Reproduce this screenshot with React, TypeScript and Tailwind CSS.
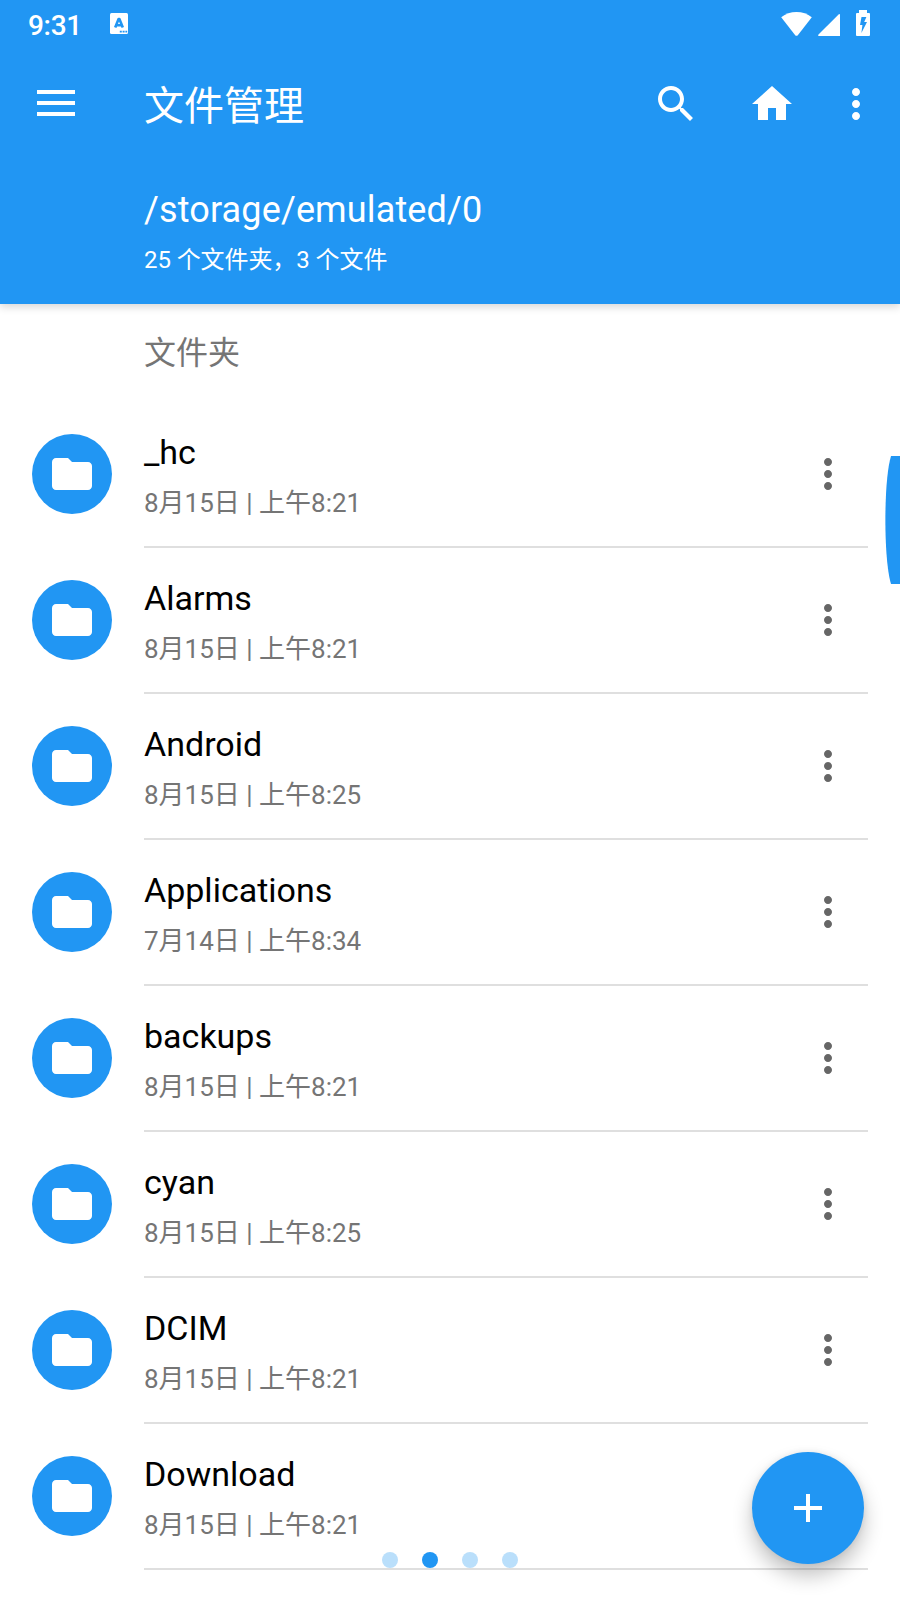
import React from "react";

type Entry = { name: string; date: string };

const entries: Entry[] = [
  { name: "_hc", date: "8月15日 | 上午8:21" },
  { name: "Alarms", date: "8月15日 | 上午8:21" },
  { name: "Android", date: "8月15日 | 上午8:25" },
  { name: "Applications", date: "7月14日 | 上午8:34" },
  { name: "backups", date: "8月15日 | 上午8:21" },
  { name: "cyan", date: "8月15日 | 上午8:25" },
  { name: "DCIM", date: "8月15日 | 上午8:21" },
  { name: "Download", date: "8月15日 | 上午8:21" },
];

function Icon({ d, className = "" }: { d: string; className?: string }) {
  return (
    <svg viewBox="0 0 24 24" className={`size-12 shrink-0 fill-current ${className}`}>
      <path d={d} />
    </svg>
  );
}

const MORE =
  "M12 8c1.1 0 2-.9 2-2s-.9-2-2-2-2 .9-2 2 .9 2 2 2zm0 2c-1.1 0-2 .9-2 2s.9 2 2 2 2-.9 2-2-.9-2-2-2zm0 6c-1.1 0-2 .9-2 2s.9 2 2 2 2-.9 2-2-.9-2-2-2z";
const SEARCH =
  "M15.5 14h-.79l-.28-.27C15.41 12.59 16 11.11 16 9.5 16 5.91 13.09 3 9.5 3S3 5.91 3 9.5 5.91 16 9.5 16c1.61 0 3.09-.59 4.23-1.57l.27.28v.79l5 4.99L20.49 19l-4.99-5zm-6 0C7.01 14 5 11.99 5 9.5S7.01 5 9.5 5 14 7.01 14 9.5 11.99 14 9.5 14z";
const HOME = "M10 20v-6h4v6h5v-8h3L12 3 2 12h3v8z";
const FOLDER =
  "M10 4H4c-1.1 0-1.99.9-1.99 2L2 18c0 1.1.9 2 2 2h16c1.1 0 2-.9 2-2V8c0-1.1-.9-2-2-2h-8l-2-2z";

function StatusBar() {
  return (
    <div className="flex h-12 items-start pl-7 pr-[30px]">
      <span className="mt-2.5 w-[82px] text-[28px] font-medium leading-8 tracking-[-0.3px]">9:31</span>
      <svg viewBox="0 0 18 21" className="mt-[13px] h-[21px] w-[18px]">
        <rect width="18" height="21" rx="1.5" fill="#fff" />
        <path
          d="M5.2 14.6 8.6 6h.8l3.4 8.6M6.8 12.2h4.4"
          fill="none"
          stroke="#2196f3"
          strokeWidth="2.6"
          strokeLinejoin="round"
        />
        <path d="M9.8 18.6h2M12.6 18.6h2M15.4 18.6h1.8" stroke="#2196f3" strokeWidth="1.7" />
      </svg>
      <div className="ml-auto flex items-start">
        <svg viewBox="0 0 31 24" className="mt-3 h-6 w-[31px]">
          <path d="M0.2 5.2C4.5 1.8 9.8 0 15.5 0s11 1.8 15.3 5.2L16.8 23.2q-1.3 1.3-2.6 0z" fill="#fff" />
        </svg>
        <svg viewBox="0 0 22 22" className="ml-1.5 mt-3.5 size-[22px]">
          <path d="M20.6.4Q22-.6 22 1v21H1q-1.6 0-.5-1.4z" fill="#fff" />
        </svg>
        <svg viewBox="0 0 14 26" className="ml-4 mt-2.5 h-[26px] w-3.5">
          <path
            fillRule="evenodd"
            d="M3 0h8v3h2a1 1 0 0 1 1 1v21a1 1 0 0 1-1 1H1a1 1 0 0 1-1-1V4a1 1 0 0 1 1-1h2zM5.5 7 4 15h2.4L5.4 23 11 12H8.2L10.4 7z"
            fill="#fff"
          />
        </svg>
      </div>
    </div>
  );
}

function Header() {
  return (
    <header className="relative z-10 h-[304px] shrink-0 bg-[#2196f3] text-white shadow-[0_3px_8px_rgba(0,0,0,0.16)]">
      <StatusBar />
      <div className="flex h-28 items-center">
        <svg viewBox="0 0 38 26" className="ml-[37px] mr-[69px] mt-[-2px] h-[26px] w-[38px]">
          <path d="M0 2h38M0 13h38M0 24h38" stroke="#fff" strokeWidth="4" />
        </svg>
        <h1 className="mt-[6px] text-[40px] leading-[48px]">文件管理</h1>
        <div className="ml-auto flex pr-5">
          <Icon d={SEARCH} className="mr-12" />
          <Icon d={HOME} className="mr-9" />
          <Icon d={MORE} />
        </div>
      </div>
      <div className="pl-36 pt-[29px]">
        <p className="text-[36px] leading-[42px] tracking-[0.14px]">/storage/emulated/0</p>
        <p className="mt-[15px] text-2xl leading-7 tracking-[-0.08px]">25 个文件夹，3 个文件</p>
      </div>
    </header>
  );
}

function Row({ name, date }: Entry) {
  return (
    <li className="flex h-[146px] pl-8 pr-8">
      <div className="mr-8 mt-8 flex size-20 shrink-0 items-center justify-center rounded-full bg-[#2196f3] text-white">
        <Icon d={FOLDER} />
      </div>
      <div className="flex flex-1 border-b-2 border-[#dfdfdf]">
        <div className="flex-1 pt-[30px]">
          <p className="text-[34px] leading-10 text-black">{name}</p>
          <p className="mt-4 text-[26px] leading-[30px] text-[#757575]">{date}</p>
        </div>
        <Icon d={MORE} className="mr-4 mt-12 text-[#666666]" />
      </div>
    </li>
  );
}

export default function App() {
  return (
    <div className="relative flex h-[1600px] w-[900px] flex-col overflow-hidden bg-white font-['Roboto','Noto_Sans_CJK_SC',sans-serif]">
      <Header />
      <main>
        <h2 className="h-[98px] pl-36 pt-[30px] text-[32px] leading-[38px] text-[#757575]">文件夹</h2>
        <ul>
          {entries.map((e) => (
            <Row key={e.name} {...e} />
          ))}
        </ul>
      </main>
      <svg viewBox="0 0 15 128" className="absolute right-0 top-[456px] h-32 w-[15px]">
        <path d="M6 0H15V128H6C-1.5 104-1.5 24 6 0z" fill="#2196f3" />
      </svg>
      <div className="absolute left-[382px] top-[1552px] flex gap-6">
        <i className="size-4 rounded-full bg-[#badffb]" />
        <i className="size-4 rounded-full bg-[#2196f3]" />
        <i className="size-4 rounded-full bg-[#badffb]" />
        <i className="size-4 rounded-full bg-[#badffb]" />
      </div>
      <button className="absolute left-[752px] top-[1452px] flex size-28 items-center justify-center rounded-full bg-[#2196f3] shadow-[0_12px_20px_rgba(0,0,0,0.24),0_0_6px_rgba(0,0,0,0.08)]">
        <svg viewBox="0 0 28 28" className="size-7">
          <path d="M14 0v28M0 14h28" stroke="#fff" strokeWidth="4" />
        </svg>
      </button>
    </div>
  );
}
